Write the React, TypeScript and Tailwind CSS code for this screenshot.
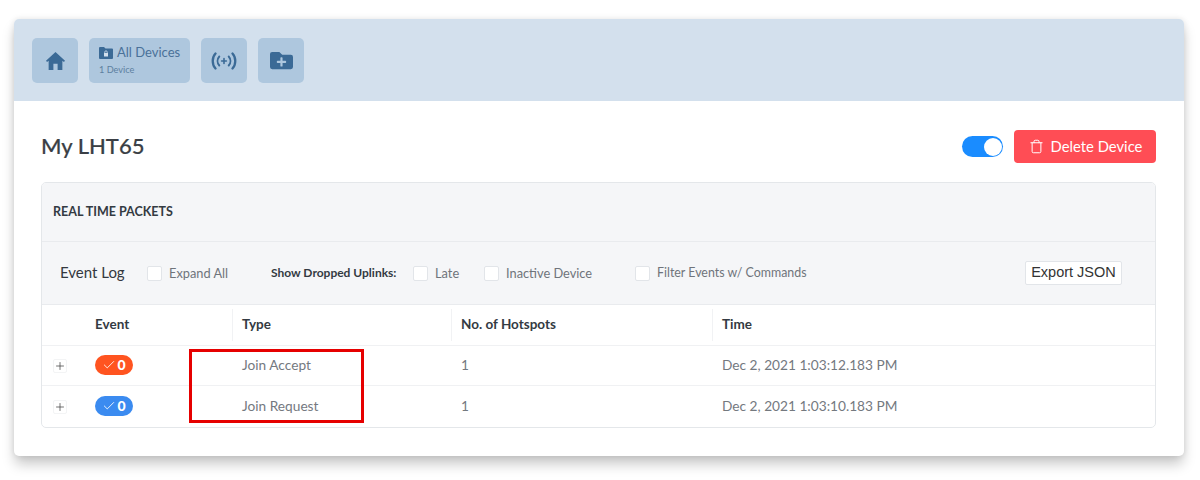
import { Check, Plus, Trash } from "lucide-react";
import { FaFolderPlus } from "react-icons/fa";

const cols = "grid grid-cols-[53px_137px_219px_261px_1fr]";

function Box({ label, className = "" }: { label: string; className?: string }) {
    return (
        <label className={"flex items-center text-[12.8px] text-[#6f747b] " + className}>
            <span className="w-[15px] h-[15px] mt-[1px] mr-[7px] bg-white border border-[#e2e5e9] rounded-[2px]" />
            <span className="mt-[1px]">{label}</span>
        </label>
    );
}

function HeadCell({ label, divider = true }: { label: string; divider?: boolean }) {
    return (
        <div className={"h-[32px] flex items-center text-[13.5px] font-bold text-[#333a42] " + (divider ? "border-l border-[#f1f2f4] pl-[9px]" : "")}>
            <span className="mb-[2px]">{label}</span>
        </div>
    );
}

function Row({ color, type, time, last = false }: { color: string; type: string; time: string; last?: boolean }) {
    return (
        <div className={cols + " items-center text-[13.7px] text-[#74797f] " + (last ? "h-[41px]" : "h-[40px] border-b border-[#f0f1f3]")}>
            <div className="pl-[11px]">
                <span className="w-[14px] h-[14px] flex items-center justify-center text-[#444] bg-white border border-[#f3f4f5] rounded-[2px]">
                    <Plus size={12} strokeWidth={1.5} />
                </span>
            </div>
            <div>
                <span className={"mt-[1px] inline-flex items-center justify-center w-[38px] h-[20px] rounded-full text-white text-[14px] font-black " + color}>
                    <Check size={14} strokeWidth={1.5} className="mr-[1px]" />0
                </span>
            </div>
            <div className="pl-[10px] pb-[1px]">{type}</div>
            <div className="pl-[10px] pb-[1px]">1</div>
            <div className="pl-[10px] pb-[1px]">{time}</div>
        </div>
    );
}

export default function App() {
    return (
        <div className="w-[1200px] h-[480px] bg-white pt-[19px] pl-[14px] relative font-['Lato',sans-serif]">
            <div className="w-[1170px] h-[437px] bg-white rounded-[5px] overflow-hidden shadow-[0_9px_13px_-1px_rgba(0,0,0,0.22),0_0_6px_rgba(0,0,0,0.1)]">
                <div className="h-[82px] bg-[#d3e0ed] pl-[18px] pt-[19px] flex gap-[11px]">
                    <div className="w-[46px] h-[45px] rounded-[5px] bg-[#aec7de] flex items-center justify-center">
                        <svg viewBox="0 0 18 17" className="w-[19px] h-[18px]">
                            <path d="M9 0 18 8.300 17 9.500 15.500 8.200V17H11V11H7V17H2.500V8.200L1 9.500 0 8.300Z" fill="#3b6a96" />
                        </svg>
                    </div>
                    <div className="w-[101px] h-[45px] rounded-[5px] bg-[#aec7de] pl-[10px] pt-[6px]">
                        <div className="flex items-center text-[13px] leading-[16px] text-[#4a7199]">
                            <svg viewBox="0 0 14 12" className="w-[14px] h-[12px] mr-[4px] mt-[1px]">
                                <path d="M1 0h4l1.500 1.500H13a1 1 0 0 1 1 1V11a1 1 0 0 1-1 1H1a1 1 0 0 1-1-1V1a1 1 0 0 1 1-1z" fill="#3b6a96" />
                                <rect x="5" y="6" width="4" height="3.500" fill="#d3e0ed" />
                                <path d="M5.800 6V5a1.200 1.200 0 0 1 2.400 0v1" fill="none" stroke="#d3e0ed" strokeWidth="0.800" />
                            </svg>
                            All Devices
                        </div>
                        <div className="text-[9.2px] leading-[12px] mt-[4px] text-[#5d7f9f]">1 Device</div>
                    </div>
                    <div className="w-[46px] h-[45px] rounded-[5px] bg-[#aec7de] flex items-center justify-center">
                        <svg viewBox="0 0 26 18" className="w-[26px] h-[18px]" fill="none" stroke="#3b6a96" strokeLinecap="round">
                            <path d="M4.500 1.500C.8 5.500.8 12.500 4.500 16.500" strokeWidth="2.300" />
                            <path d="M21.500 1.500c3.700 4 3.700 11 0 15" strokeWidth="2.300" />
                            <path d="M8.300 4.500c-2.300 2.600-2.300 6.400 0 9" strokeWidth="1.900" />
                            <path d="M17.700 4.500c2.300 2.600 2.300 6.400 0 9" strokeWidth="1.900" />
                            <path d="M13 6.600v4.800M10.600 9h4.800" strokeWidth="1.600" />
                        </svg>
                    </div>
                    <div className="w-[46px] h-[45px] rounded-[5px] bg-[#aec7de] flex items-center justify-center text-[#3b6a96]">
                        <FaFolderPlus size={23} />
                    </div>
                </div>

                <div className="h-[81px] pl-[27px] pr-[28px] pt-[10px] flex items-center justify-between">
                    <h1 className="text-[22px] mb-[2px] font-medium text-[#3a3f45] [-webkit-text-stroke:0.2px_#3a3f45]">My LHT65</h1>
                    <div className="flex items-center gap-[11px]">
                        <div className="w-[41px] h-[21px] rounded-full bg-[#1a8cff] flex items-center justify-end pr-[1px]">
                            <span className="w-[18px] h-[18px] rounded-full bg-white" />
                        </div>
                        <button className="w-[142px] h-[33px] rounded-[4px] bg-[#ff4d55] text-white text-[14.8px] flex items-center justify-center pl-[1px]">
                            <Trash size={15} strokeWidth={1.6} className="mr-[7px]" />
                            Delete Device
                        </button>
                    </div>
                </div>

                <div className="mx-[27px] w-[1115px] h-[246px] border border-[#e4e7ea] rounded-[5px] overflow-hidden">
                    <div className="h-[59px] bg-[#f5f6f8] border-b border-[#e9ebee] flex items-center pl-[11px] text-[12.5px] font-bold text-[#333a42]">
                        REAL TIME PACKETS
                    </div>
                    <div className="h-[63px] bg-[#f5f6f8] border-b border-[#e9ebee] flex items-center pl-[18px] relative">
                        <span className="text-[15px] pb-[2px] text-[#33383e] w-[87px]">Event Log</span>
                        <Box label="Expand All" className="w-[124px]" />
                        <span className="text-[12px] font-bold text-[#333a42] w-[142px]">Show Dropped Uplinks:</span>
                        <Box label="Late" className="w-[71px]" />
                        <Box label="Inactive Device" className="w-[151px]" />
                        <Box label="Filter Events w/ Commands" className="text-[12.400px]" />
                        <button className="ml-auto mr-[33px] w-[97px] h-[24px] bg-white border border-[#e2e5e9] rounded-[2px] text-[14.500px] text-[#333] font-['Liberation_Sans',sans-serif]">
                            Export JSON
                        </button>
                    </div>
                    <div className={cols + " h-[41px] items-center border-b border-[#f0f1f3]"}>
                        <div />
                        <HeadCell label="Event" divider={false} />
                        <HeadCell label="Type" />
                        <HeadCell label="No. of Hotspots" />
                        <HeadCell label="Time" />
                    </div>
                    <Row color="bg-[#ff5420]" type="Join Accept" time="Dec 2, 2021 1:03:12.183 PM" />
                    <Row color="bg-[#3b8bf0]" type="Join Request" time="Dec 2, 2021 1:03:10.183 PM" last />
                </div>
            </div>
            {/* annotation */}
            <div className="absolute left-[189px] top-[349px] w-[175px] h-[74px] border-[3px] border-[#e60000]" />
        </div>
    );
}
